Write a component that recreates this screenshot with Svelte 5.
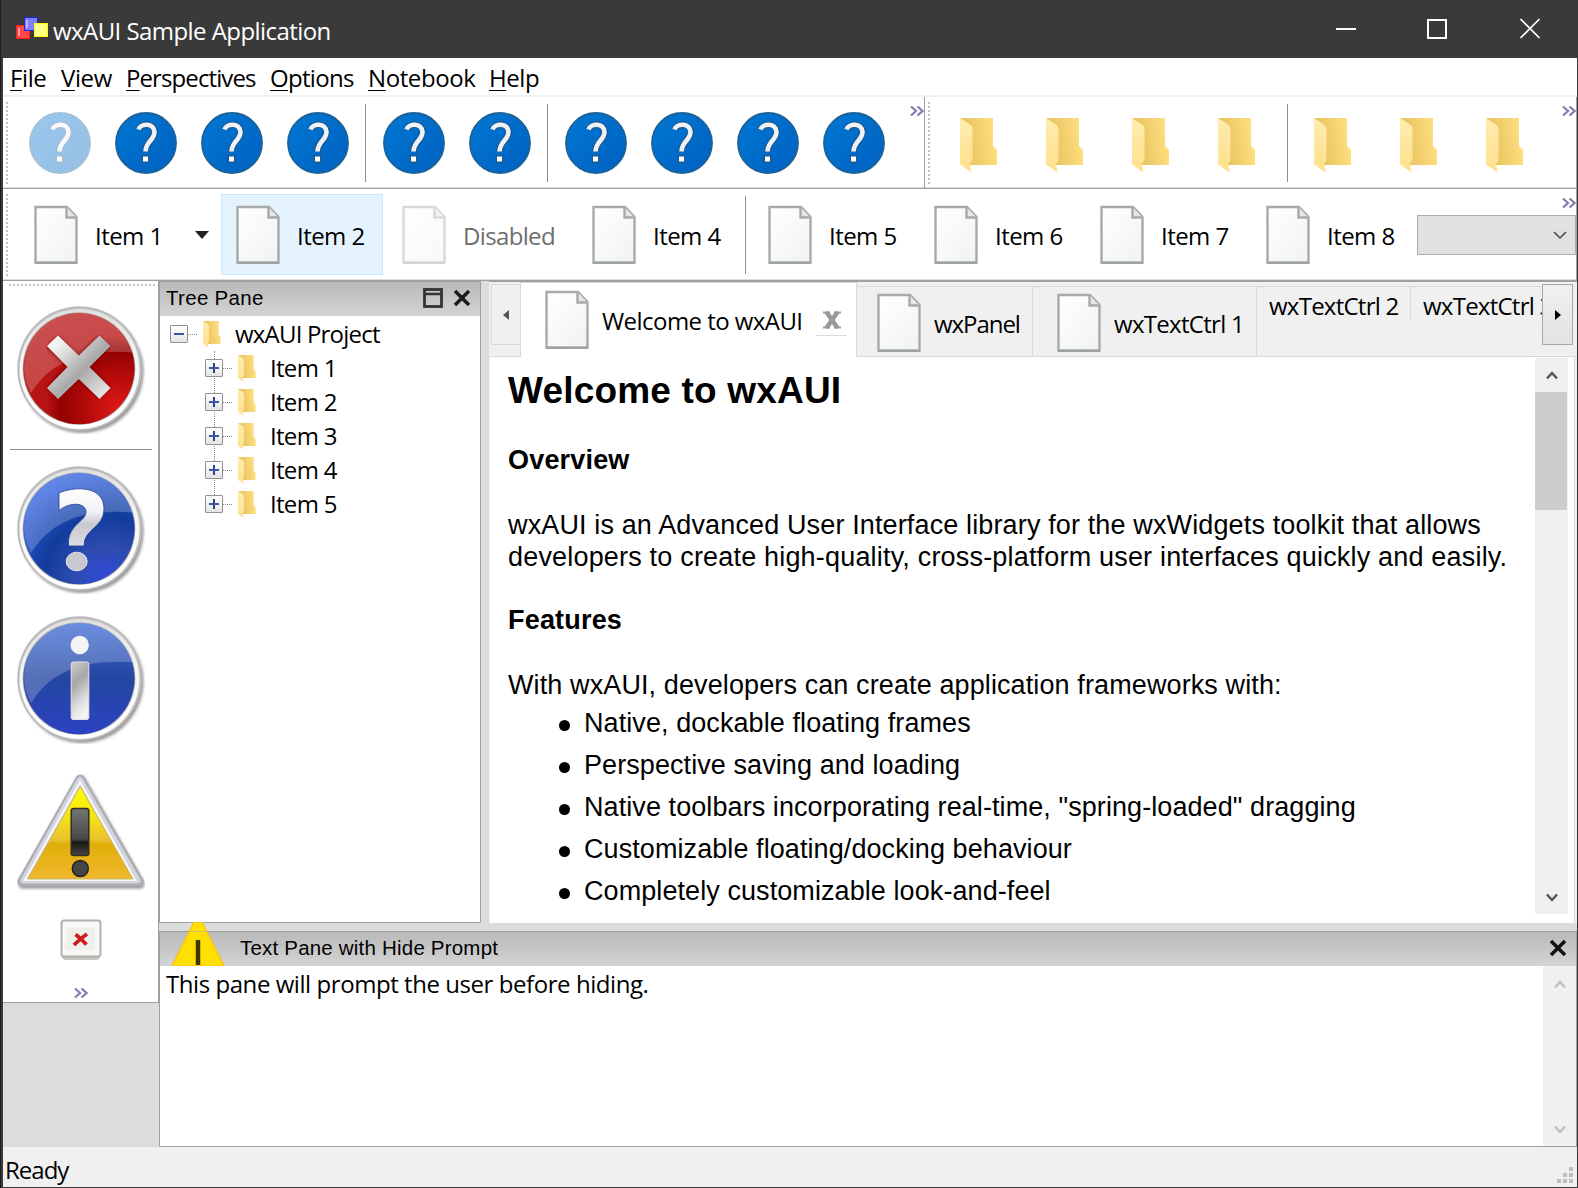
<script>
  const tree = ['Item 1', 'Item 2', 'Item 3', 'Item 4', 'Item 5'];
  const menus = ['File', 'View', 'Perspectives', 'Options', 'Notebook', 'Help'];
  const features = [
    'Native, dockable floating frames',
    'Perspective saving and loading',
    'Native toolbars incorporating real-time, "spring-loaded" dragging',
    'Customizable floating/docking behaviour',
    'Completely customizable look-and-feel'
  ];
</script>

{#snippet page()}
  <svg class="page" width="44" height="60" viewBox="0 0 44 60">
    <path d="M1.5 2H33L42.5 12V57.5H1.5Z" fill="url(#paper)" stroke="#a8aaaa" stroke-width="2.4" />
    <path d="M32.5 2V12.5H42.5" fill="#e6e6e6" stroke="#a8aaaa" stroke-width="2.4" />
    <path d="M1 58H43" stroke="#999c9c" stroke-width="1.6" />
  </svg>
{/snippet}

{#snippet folder(w, h)}
  <svg class="folder" width={w} height={h} viewBox="0 0 38 55" preserveAspectRatio="none">
    <path d="M0 0H33V28L37 32V47H8V8Z" fill="url(#fback)" />
    <path d="M0 0L10 6.5Q12.500 8 12.500 11V42L10 46L11.500 54.500L0 46.500Z" fill="url(#ffront)" />
  </svg>
{/snippet}

{#snippet help()}
  <svg width="64" height="64" viewBox="-1 -1 64 64">
    <circle cx="31" cy="31" r="30" fill="url(#help)" stroke="#1b6299" stroke-width="1.800" />
    <path d="M23.500 17.500C26 11 39 10.500 39.500 20C39.500 28 30.500 30 30.500 39.500" fill="none" stroke="#1d5a92" stroke-width="7" />
    <path d="M23.500 17.500C26 11 39 10.500 39.500 20C39.500 28 30.500 30 30.500 39.500" fill="none" stroke="#eef2f6" stroke-width="4.600" />
    <rect x="26.500" y="43" width="8" height="8" fill="#1d5a92" />
    <rect x="28" y="44.500" width="5" height="5" fill="#fff" />
  </svg>
{/snippet}

{#snippet more()}
  <svg class="more" width="14" height="10" viewBox="0 0 14 10">
    <path d="M1 .5L6 5L1 9.500M7.500 .5L12.500 5L7.500 9.500" fill="none" stroke="#7f7fb2" stroke-width="2.200" />
  </svg>
{/snippet}

{#snippet cross(w, c, s)}
  <svg width={w} height={w} viewBox="0 0 18 18">
    <path d="M2 2L16 16M16 2L2 16" stroke={c} stroke-width={s} />
  </svg>
{/snippet}

{#snippet arrow(down)}
  <svg width="12" height="9" viewBox="0 0 12 9">
    <path d={down ? 'M1 1.500L6 7L11 1.500' : 'M1 7.500L6 2L11 7.500'} fill="none" stroke="currentColor" stroke-width="2.500" />
  </svg>
{/snippet}

{#snippet orb(fill)}
  <circle cx="65" cy="65.500" r="61.500" fill="#555" opacity=".6" filter="url(#soft)" />
  <circle cx="62.500" cy="62.500" r="62.300" fill="#bdbdbd" />
  <circle cx="62.500" cy="63" r="60" fill="url(#ring)" />
  <circle cx="62" cy="62.600" r="56.300" fill="#000" opacity=".35" />
  <circle cx="62" cy="62.600" r="55.500" {fill} />
  <path d="M14 87A53 53 0 0 1 7 62.500A55.500 55.500 0 0 1 116 46.500Q42 40 14 87Z" fill="url(#shine)" />
{/snippet}

<svg class="defs" width="0" height="0">
  <defs>
    <linearGradient id="paper" x2="1" y2="1"><stop stop-color="#fff" /><stop offset="1" stop-color="#f0f2f4" /></linearGradient>
    <linearGradient id="fback" x1="0" y1=".8" x2="1" y2=".6"><stop offset=".2" stop-color="#e8c260" /><stop offset="1" stop-color="#ffdf80" /></linearGradient>
    <linearGradient id="ffront" x2="0" y2="1"><stop stop-color="#ffecb0" /><stop offset="1" stop-color="#ffe08a" /></linearGradient>
    <linearGradient id="help" x2="1" y2="1"><stop stop-color="#0078d4" /><stop offset="1" stop-color="#0060c0" /></linearGradient>
    <linearGradient id="ring" x2="0" y2="1"><stop stop-color="#e0e0e0" /><stop offset=".4" stop-color="#f4f4f4" /><stop offset="1" stop-color="#fff" /></linearGradient>
    <linearGradient id="shine" x2=".4" y2="1"><stop stop-color="#fff" stop-opacity=".26" /><stop offset="1" stop-color="#fff" stop-opacity=".2" /></linearGradient>
    <radialGradient id="red" cx=".85" cy=".85" r=".65"><stop stop-color="#e01818" /><stop offset=".8" stop-color="#930000" /><stop offset="1" stop-color="#b81414" /></radialGradient>
    <radialGradient id="blue" cx=".75" cy=".95" r=".95"><stop stop-color="#3048dc" /><stop offset=".3" stop-color="#2e4cb0" /><stop offset=".6" stop-color="#123c9c" /><stop offset="1" stop-color="#2a5cdc" /></radialGradient>
    <linearGradient id="blue2" x2="0" y2="1"><stop stop-color="#3a68d4" /><stop offset=".5" stop-color="#2446a0" /><stop offset="1" stop-color="#2c42c4" /></linearGradient>
    <linearGradient id="metal" x2="1" y2="1"><stop stop-color="#fff" /><stop offset=".2" stop-color="#ececec" /><stop offset=".55" stop-color="#a8a8a8" /><stop offset="1" stop-color="#f4f4f4" /></linearGradient>
    <linearGradient id="metalv" x2="0" y2="1"><stop stop-color="#fff" /><stop offset=".4" stop-color="#f2f2f6" /><stop offset=".62" stop-color="#c8c8d0" /><stop offset="1" stop-color="#dcdce2" /></linearGradient>
    <linearGradient id="bar" x2=".3" y2="1"><stop stop-color="#cfcfcf" /><stop offset=".4" stop-color="#a6a6a6" /><stop offset=".8" stop-color="#dedede" /><stop offset="1" stop-color="#f2f2f2" /></linearGradient>
    <linearGradient id="tri" x2="0" y2="1"><stop stop-color="#ffff00" /><stop offset=".35" stop-color="#f2e018" /><stop offset=".58" stop-color="#e8c030" /><stop offset=".62" stop-color="#e0ae08" /><stop offset="1" stop-color="#efb82c" /></linearGradient>
    <linearGradient id="dark" x2="0" y2="1"><stop stop-color="#747474" /><stop offset=".65" stop-color="#484848" /><stop offset=".72" stop-color="#161616" /><stop offset="1" stop-color="#4a4a4a" /></linearGradient>
    <filter id="soft"><feGaussianBlur stdDeviation="1.500" /></filter>
  </defs>
</svg>

<div class="window">
  <header class="title">
    <svg class="logo" width="33" height="25" viewBox="0 0 33 25">
      <rect x=".5" y="8.500" width="13" height="13" fill="#ff4646" stroke="#ff1c1c" />
      <path d="M3 11V19" stroke="#ffc0c0" stroke-width="1.500" />
      <rect x="8.500" y=".5" width="13" height="13" fill="#8080ff" stroke="#2020f0" />
      <path d="M11 3V11" stroke="#c8c8ff" stroke-width="1.500" />
      <rect x="18.500" y="6.500" width="13" height="13" fill="#ffff80" stroke="#ffff00" />
      <path d="M21 9V17" stroke="#ffffd8" stroke-width="1.500" />
    </svg>
    <span class="name">wxAUI Sample Application</span>
    <svg class="controls" width="206" height="22" viewBox="0 0 206 22" fill="none" stroke="#fff" stroke-width="2">
      <path d="M0 11H20" /><rect x="92" y="2" width="18" height="18" /><path d="M184.500 1L203.500 20M203.500 1L184.500 20" stroke-width="1.700" />
    </svg>
  </header>

  <nav class="menu">
    {#each menus as m, i}<span class="m{i}"><u>{m[0]}</u>{m.slice(1)}</span>{/each}
  </nav>

  <div class="row">
    <div class="bar first">
      <i class="grip"></i>
      <span class="tool off">{@render help()}</span>
      {#each [1, 2, 3] as _}<span class="tool">{@render help()}</span>{/each}
      <i class="sep"></i>
      {#each [1, 2] as _}<span class="tool">{@render help()}</span>{/each}
      <i class="sep"></i>
      {#each [1, 2, 3, 4] as _}<span class="tool">{@render help()}</span>{/each}
      <b class="end">{@render more()}</b>
    </div>
    <div class="bar second">
      <i class="grip"></i>
      {#each [1, 2, 3, 4] as _}<span class="tool fold">{@render folder(38, 55)}</span>{/each}
      <i class="sep"></i>
      {#each [1, 2, 3] as _}<span class="tool fold">{@render folder(38, 55)}</span>{/each}
      <b class="end">{@render more()}</b>
    </div>
  </div>

  <div class="bar items">
    <i class="grip"></i>
    <span class="item one">{@render page()}<em>Item 1</em>
      <svg class="drop" width="14" height="8"><path d="M0 0H14L7 8Z" fill="#222" /></svg></span>
    <span class="item hot">{@render page()}<em>Item 2</em></span>
    <span class="item dis">{@render page()}<em>Disabled</em></span>
    <span class="item four">{@render page()}<em>Item 4</em></span>
    <i class="sep"></i>
    {#each [5, 6, 7, 8] as n}<span class="item num">{@render page()}<em>Item {n}</em></span>{/each}
    <div class="combowrap">
      {@render more()}
      <div class="combo"><svg width="14" height="9"><path d="M1 1L7 7L13 1" fill="none" stroke="#444" stroke-width="1.500" /></svg></div>
    </div>
  </div>

  <div class="main">
    <aside>
      <div class="vtools">
        <i class="hgrip"></i>
        <svg class="big red" width="128" height="128">
          {@render orb('url(#red)')}
          <path d="M34.500 35L88 87.500M88 35L34.500 87.500" stroke="#700" stroke-width="18" opacity=".5" filter="url(#soft)" />
          <path d="M41 29.500L61.800 49.500L82.500 29.500L93.500 40L72.500 61L93.500 82L82.500 93L61.800 73L41 93L30 82L50.500 61L30 40Z" fill="url(#metal)" />
        </svg>
        <i class="hsep"></i>
        <svg class="big q" width="128" height="128">
          {@render orb('url(#blue)')}
          <path d="M42 27C55 21 87 18 87 43C87 62 67 62 67 80H51.500C50 58 69 56 69 46C69 37 54 35 42 44.500Z" fill="url(#metalv)" stroke="#1c3f94" stroke-width=".8" />
          <ellipse cx="59.700" cy="95.500" rx="10.500" ry="9.300" fill="#c8c8d0" stroke="#e4e4ea" />
        </svg>
        <svg class="big inf" width="128" height="128">
          {@render orb('url(#blue2)')}
          <circle cx="62.700" cy="29" r="9.200" fill="#f4f4f4" />
          <rect x="54.200" y="46" width="17.600" height="57.500" rx="2" fill="url(#bar)" stroke="#e4e4e4" />
        </svg>
        <svg class="big warn" width="128" height="128">
          <path d="M64 14L123 118H6Z" fill="#666" stroke="#666" stroke-width="9" stroke-linejoin="round" opacity=".7" filter="url(#soft)" />
          <path d="M63 13.500L122 115.500H5Z" fill="#c4c4ca" stroke="#adadb3" stroke-width="9.500" stroke-linejoin="round" />
          <path d="M63 14L120.500 114.500H6.500Z" fill="#ececf2" stroke="#d4d4de" stroke-width="6" stroke-linejoin="round" />
          <path d="M63 16L118 114H8Z" fill="none" stroke="#fafafc" stroke-width="2" />
          <path d="M63.300 20.500L116 113H10.500Z" fill="url(#tri)" stroke="#c8b468" stroke-width="1" />
          <rect x="54.200" y="42.500" width="17.600" height="47" rx="2.500" fill="url(#dark)" stroke="#332f20" stroke-width="1.500" />
          <circle cx="63.300" cy="102.500" r="8" fill="#454545" stroke="#222" stroke-width="1.500" />
        </svg>
        <svg class="small" width="42" height="42">
          <rect x="2" y="4" width="38" height="37" rx="4" fill="#c4c4c0" />
          <rect x="1.500" y="1.500" width="39" height="36" rx="2.500" fill="#f7f7f6" stroke="#b0b0ac" stroke-width="2" />
          <rect x="6" y="9" width="29" height="22" fill="#efefec" />
          <path d="M15.500 15.500Q19 18 26.500 25.500M27 15Q21 19 14 26" fill="none" stroke="#d01c1c" stroke-width="3.800" />
        </svg>
        {@render more()}
      </div>
    </aside>

    <div class="right">
      <div class="upper">
        <section class="treepane">
          <div class="caption"><span>Tree Pane</span>
            <svg class="max" width="20" height="20"><rect x="1.500" y="1.500" width="17" height="17" fill="none" stroke="#333" stroke-width="2.800" /><path d="M1 6H19" stroke="#333" stroke-width="2.500" /></svg>
            {@render cross(18, '#1c1c1c', 3.5)}
          </div>
          <div class="tree">
            <div class="node root"><i class="box"></i><i class="dots"></i>{@render folder(18, 27)}<span>wxAUI Project</span></div>
            <div class="kids">
              {#each tree as t}
                <div class="node"><i class="box plus"></i><i class="dots"></i>{@render folder(18, 27)}<span>{t}</span></div>
              {/each}
            </div>
          </div>
        </section>

        <section class="book">
          <div class="tabs">
            <div class="nav"><svg width="6" height="10"><path d="M6 0V10L0 5Z" fill="#555" /></svg></div>
            <div class="tab active">{@render page()}<span>Welcome to wxAUI</span><b class="x"><svg width="20" height="18" viewBox="0 0 20 18"><path d="M4.500 1L15.500 17M15.500 1L4.500 17" stroke="#999" stroke-width="4.500" /><path d="M1 1.500H8M12 1.500H19M1 16.500H8M12 16.500H19" stroke="#999" stroke-width="2" /></svg></b></div>
            <div class="tab panel">{@render page()}<span>wxPanel</span></div>
            <div class="tab ctrl">{@render page()}<span>wxTextCtrl 1</span></div>
            <div class="tab short">wxTextCtrl 2</div>
            <div class="tab short last">wxTextCtrl 3</div>
            <div class="nav next"><svg width="6" height="10"><path d="M0 0V10L6 5Z" fill="#000" /></svg></div>
          </div>
          <div class="doc">
            <article>
              <h1>Welcome to wxAUI</h1>
              <h3>Overview</h3>
              <p><span class="l1">wxAUI is an Advanced User Interface library for the wxWidgets toolkit that allows</span><br />developers to create high-quality, cross-platform user interfaces quickly and easily.</p>
              <h3 class="f">Features</h3>
              <p class="w">With wxAUI, developers can create application frameworks with:</p>
              <ul>{#each features as f}<li>{f}</li>{/each}</ul>
            </article>
            <div class="scroll">
              <span class="btn">{@render arrow(false)}</span><div class="thumb"></div><span class="btn dn">{@render arrow(true)}</span>
            </div>
          </div>
        </section>
      </div>

      <section class="textpane">
        <div class="caption">
          <svg class="tri" width="54" height="44" viewBox="0 0 54 44"><path d="M23 0H31L53 44H1Z" fill="#ffe000" stroke="#f8c418" stroke-width="1.500" /><path d="M27 18V43" stroke="#3c3600" stroke-width="4.500" /><path d="M0 9.500H54" stroke="#a0a0a0" opacity=".45" /></svg>
          <span>Text Pane with Hide Prompt</span>
          {@render cross(18, '#111', 3.5)}
        </div>
        <div class="body"><p>This pane will prompt the user before hiding.</p>
          <div class="scroll dim"><span class="btn">{@render arrow(false)}</span><span class="btn dn">{@render arrow(true)}</span></div>
        </div>
      </section>
    </div>
  </div>

  <footer><span>Ready</span>
    <svg width="16" height="16" fill="#bfbfbf"><path d="M12 0h4v4h-4zM6 6h4v4h-4zM12 6h4v4h-4zM0 12h4v4h-4zM6 12h4v4h-4zM12 12h4v4h-4z" /></svg>
  </footer>
</div>

<style>
  :global(body) { margin: 0; background: #3a3a3a; }
  * { box-sizing: border-box; }
  svg { display: block; flex: none; }
  i, em { font-style: normal; flex: none; }
  .defs { position: absolute; }
  .window {
    width: 1578px; height: 1188px; padding: 0 1px 1px 3px; overflow: hidden;
    display: flex; flex-direction: column; white-space: nowrap;
    background: linear-gradient(90deg, #1c1c1c 1px, #3a3a3a 1px);
    font: 24px/34px 'Open Sans', 'Noto Sans', sans-serif; letter-spacing: -.55px; color: #000;
  }
  .title { height: 58px; flex: none; display: flex; align-items: center; color: #fff; }
  .logo { margin: 0 4px 0 13px; }
  .name { margin-top: 3px; flex: 1; letter-spacing: -.56px; }
  .controls { margin-right: 35px; }
  .menu { height: 39px; flex: none; background: #fff; border-bottom: 2px solid #f0f0f0; display: flex; padding: 3px 0 0 7px; letter-spacing: -.4px; }
  .menu span { flex: none; }
  .menu u { text-underline-offset: 3px; text-decoration-thickness: 1px; }
  .m0 { width: 51px; } .m1 { width: 65px; } .m2 { width: 144px; } .m3 { width: 98px; } .m4 { width: 121px; }
  .m2 { letter-spacing: -.9px; }
  .m3 { letter-spacing: -.7px; }

  .row { display: flex; flex: none; height: 92px; }
  .bar { display: flex; align-items: center; height: 92px; flex: none; background: #fff; border-bottom: 1px solid #a0a0a0; border-right: 1px solid #a0a0a0; box-shadow: inset 0 -1px #dcdcdc; }
  .first { width: 922px; }
  .second { width: 652px; }
  .grip { width: 2px; height: 82px; margin: 0 9px 0 3px; background: repeating-linear-gradient(#c3c3c3 0 2px, transparent 2px 4px); }
  .tool { width: 86px; display: flex; justify-content: center; flex: none; }
  .tool.off { opacity: .4; }
  .fold { justify-content: flex-start; padding: 5px 0 0 21px; }
  .second .grip { margin-right: 9px; }
  .sep { width: 10px; height: 78px; margin-bottom: 0; background: linear-gradient(90deg, transparent 4px, #8c8c8c 4px 5px, transparent 5px); }
  .end { margin-left: auto; align-self: flex-start; padding-top: 9px; }

  .items { width: 1574px; }
  .item { display: flex; align-items: center; height: 81px; flex: none; border: 1px solid transparent; padding-left: 14px; }
  .item em { margin: 2px 0 0 17px; }
  .one { width: 204px; padding-left: 16px; }
  .drop { margin-left: auto; margin-right: 11px; }
  .hot { width: 162px; background: #e5f3ff; border-color: #cce8ff; }
  .dis { width: 193px; padding-left: 18px; color: #6d6d6d; letter-spacing: -.65px; }
  .dis .page { opacity: .45; }
  .four { width: 165px; padding-left: 15px; }
  .num { width: 166px; padding-left: 16px; }
  .combowrap { margin-left: auto; align-self: flex-start; padding-top: 9px; display: flex; flex-direction: column; align-items: flex-end; gap: 7px; }
  .combo { width: 159px; height: 40px; background: #e1e1e1; border: 1px solid #adadad; display: flex; align-items: center; justify-content: flex-end; padding-right: 8px; }

  .main { flex: none; height: 866px; display: flex; background: #dcdcdc; }
  aside { width: 156px; }
  .vtools { height: 722px; background: #fff; border-right: 1px solid #a0a0a0; border-bottom: 1px solid #a0a0a0; display: flex; flex-direction: column; }
  .hgrip { height: 2px; width: 146px; margin: 3px 0 0 6px; background: repeating-linear-gradient(90deg, #c3c3c3 0 2px, transparent 2px 4px); }
  .big { margin-left: 14px; }
  .red { margin-top: 20px; }
  .hsep { height: 1px; width: 142px; margin: 15px 0 0 7px; background: #8c8c8c; }
  .q { margin-top: 16px; }
  .inf { margin-top: 22px; }
  .warn { margin-top: 22px; }
  .small { margin: 25px 0 27px 57px; }
  .vtools .more { margin-left: 71px; }

  .right { flex: 1; display: flex; flex-direction: column; }
  .upper { height: 642px; display: flex; flex: none; }
  .treepane { width: 322px; border: 1px solid #a0a0a0; background: #fff; flex: none; }
  .caption { height: 34px; display: flex; align-items: center; background: linear-gradient(#b9b9b9, #d4d4d4); padding: 0 9px 2px 6px; font: 20.5px/26px 'Liberation Sans', Arial, sans-serif; letter-spacing: .3px; }
  .caption span { flex: 1; }
  .max { margin-right: 10px; }
  .tree { padding-top: 1px; letter-spacing: -.7px; }
  .node { display: flex; align-items: center; height: 34px; padding-left: 10px; }
  .kids { margin-left: 35px; position: relative; }
  .kids::before { content: ''; position: absolute; left: 19px; top: 0; height: 150px; border-left: 1px dotted #888; }
  .box { width: 18px; height: 18px; border: 1px solid #919191; border-radius: 1px; position: relative;
    background: linear-gradient(#3c57a4, #3c57a4) center / 10px 2px no-repeat, linear-gradient(#fff, #e4e4e4); }
  .plus { background: linear-gradient(#3c57a4, #3c57a4) center / 10px 2px no-repeat, linear-gradient(#2c4790, #2c4790) center / 2px 10px no-repeat, linear-gradient(#fff, #e4e4e4); }
  .dots { width: 9px; border-top: 1px dotted #888; margin-right: 6px; }
  .node span { margin: 0 0 0 14px; }
  .root { letter-spacing: -.8px; }

  .book { flex: 1; margin-left: 8px; background: #f0f0f0; border-top: 1px solid #a0a0a0; }
  .tabs { height: 75px; display: flex; align-items: flex-start; border-bottom: 1px solid #d9d9d9; padding-left: 2px; position: relative; }
  .nav { width: 29px; height: 61px; margin-top: 2px; border: 1px solid #d9d9d9; border-right: 0; display: flex; align-items: center; justify-content: center; flex: none; }
  .next { position: absolute; right: 4px; top: 0; width: 31px; border: 1px solid #a8a8a8; background: linear-gradient(#f0f0f0, #e2e2e2); }
  .tab { border-right: 1px solid #d9d9d9; display: flex; flex: none; margin-top: 4px; border-top: 1px solid #d9d9d9; height: 70px; }
  .tab .page { margin-top: 6px; }
  .tab span { margin: 20px 0 0 13px; }
  .active { width: 337px; height: 75px; margin: 0 0 -1px; padding-left: 24px; background: #fff; border-left: 1px solid #d9d9d9; }
  .active .page { margin-top: 7px; }
  .active span { width: 214px; margin-top: 21px; }
  .x { height: 25px; width: 31px; margin-top: 28px; padding-left: 6px; border-bottom: 1px solid #ddd; }
  .panel { width: 176px; padding-left: 20px; letter-spacing: -1.050px; }
  .ctrl { width: 224px; padding-left: 24px; letter-spacing: -.7px; }
  .short { width: 154px; padding: 2px 0 0 12px; height: 34px; letter-spacing: -.75px; }
  .last { width: 164px; border-right: 0; }
  .doc { height: 566px; margin: 0 2px 0 1px; background: #fff; border-right: 1px solid #dcdcdc; display: flex; justify-content: space-between; padding: 0 6px 9px 18px; }
  article { font: 27px/32px 'Liberation Sans', Arial, sans-serif; letter-spacing: .185px; padding-top: 12px; }
  h1, h3, p, ul { margin: 0; }
  h1 { font-size: 37px; line-height: 44px; }
  h3 { font-size: 27px; line-height: 32px; margin: 31px 0 33px; }
  .l1 { letter-spacing: .135px; }
  .f { margin: 31px 0 33px; }
  .w { letter-spacing: .11px; }
  ul { list-style: none; padding: 0 0 0 76px; margin-top: 1px; letter-spacing: .08px; }
  li { height: 41.900px; line-height: 42px; position: relative; }
  li::before { content: ''; position: absolute; left: -25px; top: 18px; width: 11px; height: 11px; border-radius: 50%; background: #000; }
  .scroll { width: 33px; background: #f0f0f0; display: flex; flex-direction: column; color: #555; margin-top: 1px; flex: none; }
  .btn { height: 34px; display: flex; align-items: center; justify-content: center; flex: none; }
  .thumb { height: 118px; width: 32px; background: #cdcdcd; }
  .dn { margin-top: auto; }

  .textpane { margin-top: 8px; height: 216px; border: 1px solid #a0a0a0; background: #fff; }
  .textpane .caption { padding: 0 9px 0 11px; align-items: flex-end; letter-spacing: .2px; }
  .textpane .caption span { margin: 0 0 5px 15px; }
  .textpane .caption > svg:last-child { margin-bottom: 9px; }
  .body { display: flex; justify-content: space-between; height: 180px; }
  .body p { padding: 1px 0 0 6px; letter-spacing: -.44px; }
  .dim { color: #c0c0c0; margin: 0; }
  .body .btn { height: 36px; }
  .body .dn { height: 34px; }
  footer { flex: 1; background: #f0f0f0; display: flex; justify-content: space-between; align-items: center; padding: 5px 4px 0 2px; letter-spacing: -1px; }
  footer svg { margin-top: 10px; }
</style>
